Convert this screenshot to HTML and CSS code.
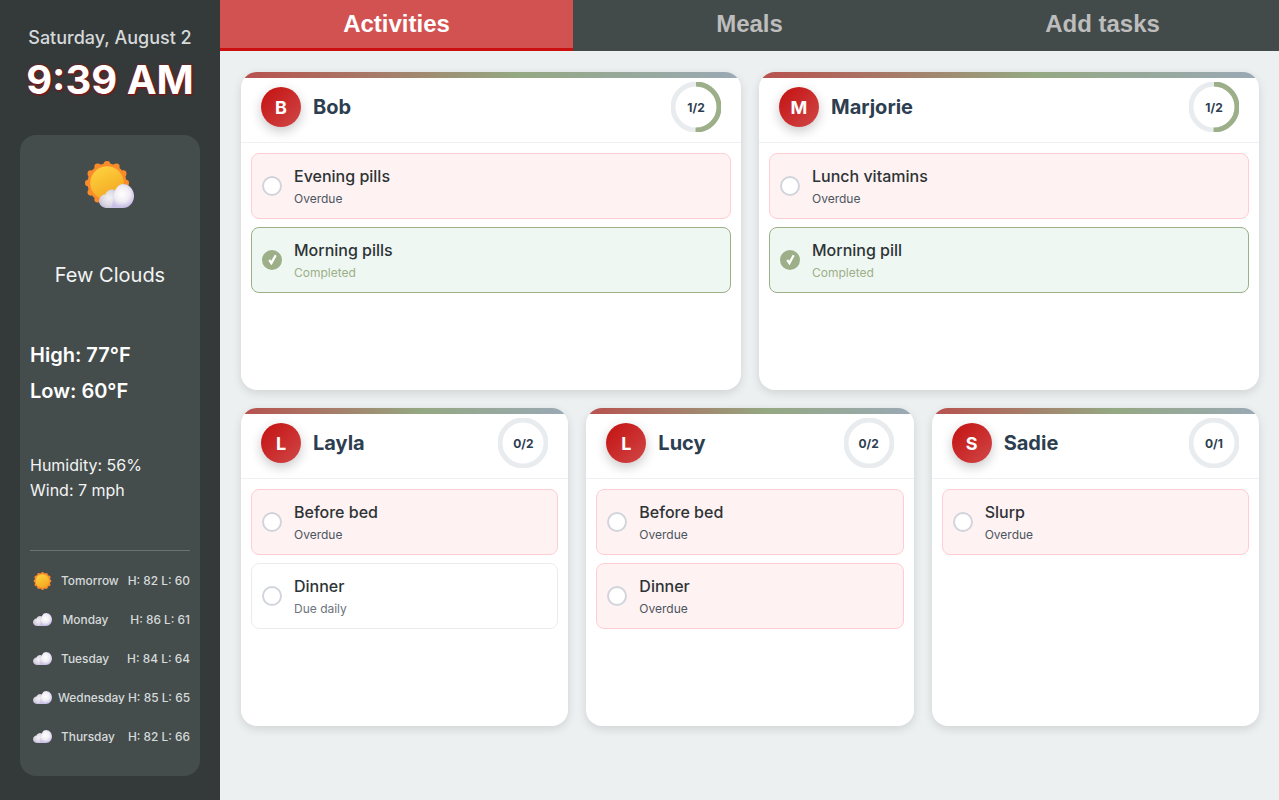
FILE: index.html
```html
<!DOCTYPE html>
<html lang="en">
<head>
<meta charset="utf-8">
<title>Family board</title>
<link rel="stylesheet" href="styles.css">
</head>
<body>
<svg class="defs" width="0" height="0" aria-hidden="true">
  <defs>
    <linearGradient id="sunFill" x1="0.2" y1="0" x2="0.7" y2="1">
      <stop offset="0" stop-color="#fdd23f"/>
      <stop offset="1" stop-color="#f3a620"/>
    </linearGradient>
    <radialGradient id="cloudBig" gradientUnits="userSpaceOnUse" cx="25" cy="11" r="14">
      <stop offset="0" stop-color="#ffffff"/>
      <stop offset="0.6" stop-color="#efecf3"/>
      <stop offset="1" stop-color="#c9c0e6"/>
    </radialGradient>
    <radialGradient id="cloudSmall" gradientUnits="userSpaceOnUse" cx="11" cy="15" r="12">
      <stop offset="0" stop-color="#f4f2f5"/>
      <stop offset="0.65" stop-color="#dcd8e2"/>
      <stop offset="1" stop-color="#c4bddc"/>
    </radialGradient>
    <symbol id="sun" viewBox="0 0 40 40">
      <g fill="#f98b2b">
        <circle cx="20" cy="20" r="17.800"/>
        <circle cx="20" cy="3" r="3"/><circle cx="28.500" cy="5.300" r="3"/><circle cx="34.700" cy="11.500" r="3"/>
        <circle cx="37" cy="20" r="3"/><circle cx="34.700" cy="28.500" r="3"/><circle cx="28.500" cy="34.700" r="3"/>
        <circle cx="20" cy="37" r="3"/><circle cx="11.500" cy="34.700" r="3"/><circle cx="5.300" cy="28.500" r="3"/>
        <circle cx="3" cy="20" r="3"/><circle cx="5.300" cy="11.500" r="3"/><circle cx="11.500" cy="5.300" r="3"/>
      </g>
      <circle cx="20" cy="20" r="15.200" fill="url(#sunFill)"/>
    </symbol>
    <symbol id="cloud" viewBox="0 0 38 26">
      <path fill="url(#cloudSmall)" d="M9 26C4 26 0 22.500 0 18.500 0 14.500 3.200 11.300 7 11 8.200 7.800 11 6 14 6c4 0 7 3 8 6v14Z"/>
      <path fill="url(#cloudBig)" d="M13 26c2.500-4 2-8 2.500-10.500C16.500 7 20 0 26 0c6.600 0 12 5.800 12 13s-5.400 13-12 13Z"/>
    </symbol>
  </defs>
</svg>
<div class="app">
  <aside class="sidebar">
    <div class="clock">
      <div class="date">Saturday, August 2</div>
      <div class="time">9:39 AM</div>
    </div>
    <section class="weather">
      <div class="now-icon">
        <svg class="now-sun" viewBox="0 0 40 40"><use href="#sun"/></svg>
        <svg class="now-cloud" viewBox="0 0 38 26"><use href="#cloud"/></svg>
      </div>
      <div class="cond">Few Clouds</div>
      <div class="temps">
        <div>High: 77°F</div>
        <div>Low: 60°F</div>
      </div>
      <div class="extra">
        <div>Humidity: 56%</div>
        <div>Wind: 7 mph</div>
      </div>
      <div class="forecast">
        <div class="fc-row"><svg class="fc-sun" viewBox="0 0 40 40"><use href="#sun"/></svg><span class="fc-day">Tomorrow</span><span class="fc-temp">H: 82 L: 60</span></div>
        <div class="fc-row"><svg class="fc-cloud" viewBox="0 0 38 26"><use href="#cloud"/></svg><span class="fc-day fc-mon">Monday</span><span class="fc-temp">H: 86 L: 61</span></div>
        <div class="fc-row"><svg class="fc-cloud" viewBox="0 0 38 26"><use href="#cloud"/></svg><span class="fc-day">Tuesday</span><span class="fc-temp">H: 84 L: 64</span></div>
        <div class="fc-row"><svg class="fc-cloud" viewBox="0 0 38 26"><use href="#cloud"/></svg><span class="fc-day fc-wed">Wednesday</span><span class="fc-temp">H: 85 L: 65</span></div>
        <div class="fc-row"><svg class="fc-cloud" viewBox="0 0 38 26"><use href="#cloud"/></svg><span class="fc-day">Thursday</span><span class="fc-temp">H: 82 L: 66</span></div>
      </div>
    </section>
  </aside>
  <div class="content">
    <nav class="tabs">
      <div class="tab active">Activities</div>
      <div class="tab">Meals</div>
      <div class="tab">Add tasks</div>
    </nav>
    <main class="board">
      <div class="row row-two">
        <article class="card">
          <header class="card-head">
            <div class="avatar">B</div><h2 class="name">Bob</h2>
            <div class="ring"><svg viewBox="0 0 50 50"><circle class="ring-bg" cx="25" cy="25" r="23"/><circle class="ring-fg half" cx="25" cy="25" r="23"/></svg><span>1/2</span></div>
          </header>
          <div class="list">
            <div class="item overdue"><span class="check"></span><div><div class="title">Evening pills</div><div class="sub">Overdue</div></div></div>
            <div class="item done"><span class="check"><svg viewBox="0 0 20 20"><path d="M7.200 10 9.400 13 13.700 5.200"/></svg></span><div><div class="title">Morning pills</div><div class="sub">Completed</div></div></div>
          </div>
        </article>
        <article class="card">
          <header class="card-head">
            <div class="avatar">M</div><h2 class="name">Marjorie</h2>
            <div class="ring"><svg viewBox="0 0 50 50"><circle class="ring-bg" cx="25" cy="25" r="23"/><circle class="ring-fg half" cx="25" cy="25" r="23"/></svg><span>1/2</span></div>
          </header>
          <div class="list">
            <div class="item overdue"><span class="check"></span><div><div class="title">Lunch vitamins</div><div class="sub">Overdue</div></div></div>
            <div class="item done"><span class="check"><svg viewBox="0 0 20 20"><path d="M7.200 10 9.400 13 13.700 5.200"/></svg></span><div><div class="title">Morning pill</div><div class="sub">Completed</div></div></div>
          </div>
        </article>
      </div>
      <div class="row row-three">
        <article class="card">
          <header class="card-head">
            <div class="avatar">L</div><h2 class="name">Layla</h2>
            <div class="ring"><svg viewBox="0 0 50 50"><circle class="ring-bg" cx="25" cy="25" r="23"/></svg><span>0/2</span></div>
          </header>
          <div class="list">
            <div class="item overdue"><span class="check"></span><div><div class="title">Before bed</div><div class="sub">Overdue</div></div></div>
            <div class="item"><span class="check"></span><div><div class="title">Dinner</div><div class="sub">Due daily</div></div></div>
          </div>
        </article>
        <article class="card">
          <header class="card-head">
            <div class="avatar">L</div><h2 class="name">Lucy</h2>
            <div class="ring"><svg viewBox="0 0 50 50"><circle class="ring-bg" cx="25" cy="25" r="23"/></svg><span>0/2</span></div>
          </header>
          <div class="list">
            <div class="item overdue"><span class="check"></span><div><div class="title">Before bed</div><div class="sub">Overdue</div></div></div>
            <div class="item overdue"><span class="check"></span><div><div class="title">Dinner</div><div class="sub">Overdue</div></div></div>
          </div>
        </article>
        <article class="card">
          <header class="card-head">
            <div class="avatar">S</div><h2 class="name">Sadie</h2>
            <div class="ring"><svg viewBox="0 0 50 50"><circle class="ring-bg" cx="25" cy="25" r="23"/></svg><span>0/1</span></div>
          </header>
          <div class="list">
            <div class="item overdue"><span class="check"></span><div><div class="title">Slurp</div><div class="sub">Overdue</div></div></div>
          </div>
        </article>
      </div>
    </main>
  </div>
</div>
</body>
</html>
```
FILE: styles.css
```css
* { box-sizing: border-box; }
html, body { margin: 0; height: 100%; }
body { font-family: Inter, "Liberation Sans", sans-serif; background: #ecf0f1; color: #2c3e50; overflow: hidden; }
.defs { position: absolute; }
.app { display: flex; height: 800px; }

.sidebar { width: 220px; flex: none; background: #343a3a; padding: 27px 20px 24px; display: flex; flex-direction: column; }
.clock { text-align: center; height: 108px; }
.date { font-size: 18px; line-height: 22px; font-weight: 500; color: #d5d9da; }
.time { font-size: 40px; line-height: 48px; font-weight: 700; color: #fff; margin-top: 7px; text-shadow: 0 0 3px #a01010, 1px 1px 2px #801010; }
.weather { flex: 1; background: #454d4c; border-radius: 16px; padding: 25px 10px 0; display: flex; flex-direction: column; color: #f2f4f4; }
.now-icon { position: relative; width: 50px; height: 50px; align-self: center; flex: none; }
.now-sun { position: absolute; left: 0; top: 1px; width: 44px; height: 44px; }
.now-cloud { position: absolute; left: 13px; top: 24px; width: 37px; height: 24px; }
.cond { font-size: 20px; line-height: 24px; text-align: center; margin-top: 53px; }
.temps { margin-top: 50px; font-size: 20px; line-height: 36px; font-weight: 600; color: #fff; }
.extra { margin-top: 44px; font-size: 16px; line-height: 25px; font-weight: 400; }
.forecast { margin-top: 47px; border-top: 1px solid #6b7272; padding-top: 10px; }
.fc-row { display: flex; align-items: center; height: 39px; font-size: 11.900px; font-weight: 500; color: #d5dadb; }
.fc-row svg { flex: none; width: 19px; margin-left: 3px; }
.fc-sun { height: 18px; }
.fc-cloud { height: 13px; }
.fc-day { margin-left: 9px; flex: 1; white-space: nowrap; }
.fc-mon { margin-left: 10.500px; }
.fc-wed { margin-left: 6px; }
.fc-temp { white-space: nowrap; }

.content { flex: 1; min-width: 0; display: flex; flex-direction: column; }
.tabs { display: flex; height: 51px; flex: none; background: #434b4a; }
.tab { flex: 1; display: flex; align-items: center; justify-content: center; font-family: "Liberation Sans", Arial, sans-serif; font-size: 24px; font-weight: 700; color: #bdbdbd; padding-bottom: 3px; }
.tab.active { background: #d25252; color: #fff; border-bottom: 3px solid #cc0f0f; padding-bottom: 0; }

.board { flex: 1; padding: 21px 20px 0 21px; display: flex; flex-direction: column; gap: 18px; }
.row { display: grid; gap: 18px; height: 318px; }
.row-two { grid-template-columns: repeat(2, 1fr); }
.row-three { grid-template-columns: repeat(3, 1fr); }
.card { position: relative; background: #fff; border-radius: 16px; overflow: hidden; box-shadow: 0 3px 10px rgba(0,0,0,.12); }
.card::before { content: ""; position: absolute; left: 0; right: 0; top: 0; height: 6px; background: linear-gradient(90deg, #b8504e, #94a882 55%, #9aa9b5); }
.card-head { display: flex; align-items: center; gap: 12px; padding: 10px 20px; border-bottom: 1px solid #eef0f1; height: 71px; }
.avatar { width: 40px; height: 40px; border-radius: 50%; background: linear-gradient(135deg, #c41010, #d04848); color: #fff; font-size: 18px; font-weight: 700; display: flex; align-items: center; justify-content: center; box-shadow: 0 4px 12px rgba(0,0,0,.22); }
.name { margin: 0; font-size: 20px; font-weight: 700; color: #2c3e50; flex: 1; }
.ring { position: relative; width: 50px; height: 50px; display: flex; align-items: center; justify-content: center; font-size: 12px; font-weight: 700; color: #2c3e50; }
.ring svg { position: absolute; inset: 0; width: 50px; height: 50px; transform: rotate(-90deg); }
.ring circle { fill: none; stroke-width: 5; }
.ring-bg { stroke: #e9ecef; }
.ring-fg { stroke: #9caf88; }
.ring-fg.half { stroke-dasharray: 72.26 144.51; }
.ring span { position: relative; }

.list { padding: 10px; display: flex; flex-direction: column; gap: 8px; }
.item { display: flex; align-items: center; gap: 12px; height: 66px; padding: 0 10px; border: 1px solid #e9ecef; border-radius: 8px; background: #fff; }
.check { position: relative; width: 20px; height: 20px; flex: none; border: 2px solid #d1d5db; border-radius: 50%; background: #fff; }
.check svg { position: absolute; left: -2px; top: -2px; width: 20px; height: 20px; display: block; }
.check path { fill: none; stroke: #fff; stroke-width: 2.300; }
.title { font-size: 16px; line-height: 22px; font-weight: 450; color: #2d3436; }
.sub { font-size: 12px; line-height: 16px; margin-top: 4px; color: #6c757d; }
.overdue { background: #fff2f2; border-color: #ffcdd2; }
.overdue .sub { color: #4a5560; }
.done { background: #eff7f3; border-color: #9caf88; }
.done .sub { color: #9caf88; }
.done .check { background: #9caf88; border-color: #9caf88; }
```
